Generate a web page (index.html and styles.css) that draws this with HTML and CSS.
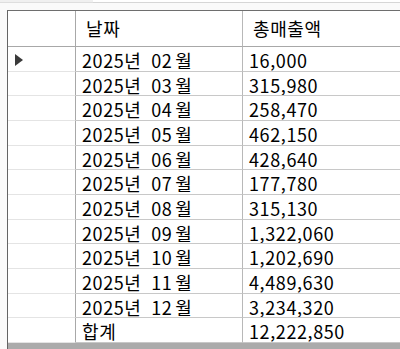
FILE: index.html
```html
<!DOCTYPE html>
<html lang="ko">
<head>
<meta charset="utf-8">
<link rel="stylesheet" href="styles.css">
</head>
<body>
<div class="topbar">
  <div class="topbar-left"></div>
  <div class="topbar-box"></div>
</div>
<div class="grid">
  <div class="row head">
    <div class="cell rh"></div>
    <div class="cell hd">날짜</div>
    <div class="cell hd">총매출액</div>
  </div>
  <div class="row">
    <div class="cell rh"><span class="pointer"></span></div>
    <div class="cell">2025년 02<span class="m">월</span></div>
    <div class="cell">16,000</div>
  </div>
  <div class="row"><div class="cell rh"></div><div class="cell">2025년 03<span class="m">월</span></div><div class="cell">315,980</div></div>
  <div class="row"><div class="cell rh"></div><div class="cell">2025년 04<span class="m">월</span></div><div class="cell">258,470</div></div>
  <div class="row"><div class="cell rh"></div><div class="cell">2025년 05<span class="m">월</span></div><div class="cell">462,150</div></div>
  <div class="row"><div class="cell rh"></div><div class="cell">2025년 06<span class="m">월</span></div><div class="cell">428,640</div></div>
  <div class="row"><div class="cell rh"></div><div class="cell">2025년 07<span class="m">월</span></div><div class="cell">177,780</div></div>
  <div class="row"><div class="cell rh"></div><div class="cell">2025년 08<span class="m">월</span></div><div class="cell">315,130</div></div>
  <div class="row"><div class="cell rh"></div><div class="cell">2025년 09<span class="m">월</span></div><div class="cell">1,322,060</div></div>
  <div class="row"><div class="cell rh"></div><div class="cell">2025년 10<span class="m">월</span></div><div class="cell">1,202,690</div></div>
  <div class="row"><div class="cell rh"></div><div class="cell">2025년 11<span class="m">월</span></div><div class="cell">4,489,630</div></div>
  <div class="row"><div class="cell rh"></div><div class="cell">2025년 12<span class="m">월</span></div><div class="cell">3,234,320</div></div>
  <div class="row"><div class="cell rh"></div><div class="cell">합계</div><div class="cell">12,222,850</div></div>
  <div class="empty"></div>
</div>
</body>
</html>
```
FILE: styles.css
```css
html, body {
  margin: 0;
  padding: 0;
}
body {
  background: #fafafa;
  font-family: "Noto Sans CJK KR", "Noto Sans", sans-serif;
  color: #000;
  width: 400px;
  height: 349px;
  overflow: hidden;
}
.topbar {
  display: flex;
  height: 10px;
}
.topbar-left {
  width: 93px;
  height: 2px;
  background: #f0f0f0;
  border-bottom: 1px solid #dedede;
}
.topbar-box {
  flex: 1;
  height: 2px;
  background: #ffffff;
  border-bottom: 1px solid #d6d6d6;
}
.grid {
  margin-left: 7px;
  border-left: 1px solid #646464;
  border-top: 1px solid #6e6e6e;
  background: #fff;
}
.row {
  display: grid;
  grid-template-columns: 68px 167px 1fr;
  height: calc(296px / 12);
}
.row.head {
  height: 36px;
}
.cell {
  box-sizing: border-box;
  border-right: 1px solid #b8b8b8;
  border-bottom: 1px solid #c8c8c8;
  font-size: 18px;
  line-height: 24px;
  letter-spacing: 0.6px;
  padding: 1px 0 0 6px;
  white-space: nowrap;
  word-spacing: 4px;
  overflow: hidden;
}
.m {
  margin-left: 3px;
}
.cell:last-child {
  border-right: none;
}
.cell.rh {
  border-bottom-color: #e4e4e4;
  border-right-color: #a8a8a8;
  display: flex;
  align-items: center;
  padding: 2px 0 0 7px;
}
.head .cell {
  border-bottom-color: #a8a8a8;
}
.cell.hd {
  line-height: 35px;
  padding: 0 0 0 10px;
}
.pointer {
  width: 0;
  height: 0;
  border-left: 8px solid #3a3a3a;
  border-top: 6px solid transparent;
  border-bottom: 6px solid transparent;
}
.empty {
  height: 10px;
  background: #ababab;
}
```
